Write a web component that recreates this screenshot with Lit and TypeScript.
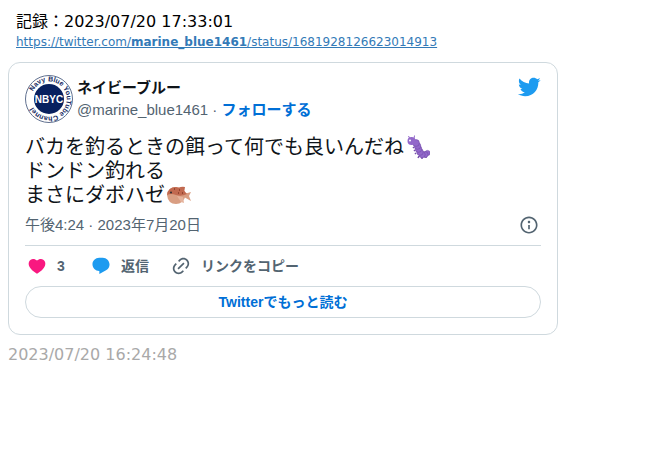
import { LitElement, html, css, svg } from "lit";
import { customElement } from "lit/decorators.js";

const icon = (cls: string, d: string) => html`
  <svg class="icon ${cls}" viewBox="0 0 24 24" aria-hidden="true">${svg`<path d=${d}></path>`}</svg>
`;

const BIRD =
  "M23.643 4.937c-.835.37-1.732.62-2.675.733.962-.576 1.7-1.49 2.048-2.578-.9.534-1.897.922-2.958 1.13-.85-.904-2.06-1.47-3.4-1.47-2.572 0-4.658 2.086-4.658 4.66 0 .364.042.718.12 1.06-3.873-.195-7.304-2.05-9.602-4.868-.4.69-.63 1.49-.63 2.342 0 1.616.823 3.043 2.072 3.878-.764-.025-1.482-.234-2.11-.583v.06c0 2.257 1.605 4.14 3.737 4.568-.392.106-.803.162-1.227.162-.3 0-.593-.028-.877-.082.593 1.85 2.313 3.198 4.352 3.234-1.595 1.25-3.604 1.995-5.786 1.995-.376 0-.747-.022-1.112-.065 2.062 1.323 4.51 2.093 7.14 2.093 8.57 0 13.255-7.098 13.255-13.254 0-.2-.005-.402-.014-.602.91-.658 1.7-1.477 2.323-2.41z";
const HEART =
  "M20.884 13.19c-1.351 2.48-4.001 5.12-8.379 7.67l-.503.3-.504-.3c-4.379-2.55-7.029-5.19-8.382-7.67-1.36-2.5-1.41-4.86-.514-6.67.887-1.79 2.647-2.91 4.601-3.01 1.651-.09 3.368.56 4.798 2.01 1.429-1.45 3.146-2.1 4.796-2.01 1.954.1 3.714 1.22 4.601 3.01.896 1.81.846 4.17-.514 6.67z";
const REPLY =
  "M1.751 10c0-4.42 3.584-8 8.005-8h4.366c4.49 0 8.129 3.64 8.129 8.13 0 2.96-1.607 5.68-4.196 7.11l-8.054 4.46v-3.69h-.067c-4.49.1-8.183-3.51-8.183-8.01z";
const CHAIN =
  "M18.36 5.64c-1.95-1.96-5.11-1.96-7.07 0L9.88 7.05 8.46 5.64l1.42-1.42c2.73-2.73 7.16-2.73 9.9 0 2.73 2.74 2.73 7.17 0 9.9l-1.42 1.42-1.41-1.42 1.41-1.41c1.96-1.96 1.96-5.12 0-7.07zm-2.12 3.53l-7.07 7.07-1.41-1.41 7.07-7.07 1.41 1.41zm-12.02.71l1.42-1.42 1.41 1.42-1.41 1.41c-1.96 1.96-1.96 5.12 0 7.07 1.95 1.96 5.11 1.96 7.07 0l1.41-1.41 1.42 1.41-1.42 1.42c-2.73 2.73-7.16 2.73-9.9 0-2.73-2.74-2.73-7.17 0-9.9z";
const INFO =
  "M13.5 8.5c0 .83-.67 1.5-1.5 1.5s-1.5-.67-1.5-1.5S11.17 7 12 7s1.5.67 1.5 1.5zM13 17v-5h-2v5h2zm-1 5.25c5.66 0 10.25-4.59 10.25-10.25S17.66 1.75 12 1.75 1.75 6.34 1.75 12 6.34 22.25 12 22.25zM20.25 12c0 4.56-3.69 8.25-8.25 8.25S3.75 16.56 3.75 12 7.44 3.75 12 3.75s8.25 3.69 8.25 8.25z";

@customElement("tweet-card")
class TweetCard extends LitElement {
  static styles = css`
    :host {
      display: block;
      box-sizing: border-box;
      max-width: 550px;
      padding: 12px 16px 16px;
      border: 1px solid #cfd9de;
      border-radius: 12px;
      background: #fff;
      color: #0f1419;
      font-family: "Liberation Sans", "Noto Sans CJK JP", sans-serif;
    }
    a {
      color: inherit;
      text-decoration: none;
    }
    button {
      padding: 0;
      border: 0;
      background: none;
      color: inherit;
      font: inherit;
      cursor: pointer;
    }
    .icon {
      display: block;
      flex: none;
      width: 20px;
      height: 20px;
      fill: currentColor;
    }
    .icon.bird {
      width: 24px;
      height: 24px;
      color: #1d9bf0;
    }
    .icon.heart {
      color: #f91880;
    }
    .icon.reply {
      color: #1d9bf0;
    }
    .header {
      display: flex;
      align-items: flex-start;
      gap: 4px;
    }
    .avatar {
      display: block;
      width: 48px;
      height: 48px;
    }
    .ring {
      font: bold 7px "Liberation Sans", sans-serif;
      fill: #14285f;
    }
    .initials {
      font: bold 10px "Liberation Sans", sans-serif;
      fill: #fff;
    }
    .who {
      flex: 1;
      padding-top: 2px;
      font-size: 15px;
      line-height: 22px;
    }
    .name {
      display: block;
      font-weight: bold;
    }
    .handle {
      color: #536471;
    }
    .follow {
      color: #006fd6;
      font-weight: bold;
    }
    .text {
      margin: 12px 0 0;
      font-size: 20px;
      line-height: 24px;
    }
    .emoji {
      width: 24px;
      height: 24px;
      margin: 0 2px;
      vertical-align: -5px;
    }
    .meta {
      display: flex;
      align-items: center;
      justify-content: space-between;
      margin-top: 6px;
      padding: 2px 2px 10px 0;
      border-bottom: 1px solid #cfd9de;
      color: #536471;
      font-size: 15px;
      line-height: 20px;
    }
    .actions {
      display: flex;
      gap: 22px;
      padding: 4px 2px;
      color: #536471;
      font-size: 14px;
      font-weight: bold;
      line-height: 20px;
    }
    .action {
      display: flex;
      align-items: center;
      gap: 10px;
      min-width: 42px;
      height: 32px;
    }
    .more {
      display: block;
      border: 1px solid #cfd9de;
      border-radius: 16px;
      color: #006fd6;
      font-size: 14px;
      font-weight: bold;
      line-height: 30px;
      text-align: center;
    }
  `;

  render() {
    return html`
      <div class="header">
        <a href="#profile" aria-label="ネイビーブルー">
          <svg class="avatar" viewBox="0 0 48 48" aria-hidden="true">
            <circle cx="24" cy="24" r="23.5" fill="#fff" stroke="#60708f"></circle>
            <circle cx="24" cy="24" r="15" fill="#08205f"></circle>
            <path id="ring" fill="none" d="M8 16.500A17.670 17.670 0 0 1 40 31.500A17.670 17.670 0 0 1 8 16.500"></path>
            <text class="ring"><textPath href="#ring">Navy Blue YouTube Channel</textPath></text>
            <text class="initials" x="24" y="28" text-anchor="middle">NBYC</text>
          </svg>
        </a>
        <div class="who">
          <a class="name" href="#profile">ネイビーブルー</a>
          <a class="handle" href="#profile">@marine_blue1461</a>
          <span class="handle">·</span>
          <a class="follow" href="#follow">フォローする</a>
        </div>
        <a href="#tweet" aria-label="Twitter">${icon("bird", BIRD)}</a>
      </div>
      <p class="text">
        バカを釣るときの餌って何でも良いんだね<svg class="emoji" viewBox="0 0 24 24" role="img" aria-label="いも虫">
          <path d="M4 4L2.500 1M8 4L8.500 .5" stroke="#9268ca" fill="none"></path>
          <path d="M8 12l-1 1M9 15l-1 1M10 18l-1 1M13 21l-1 2M16 22v2M20 21v2" stroke="#744eaa" stroke-width="1.5"></path>
          <g fill="#9268ca" stroke="#744eaa" stroke-width=".6">
            <circle cx="21.500" cy="18" r="2.600"></circle>
            <circle cx="19" cy="19.500" r="3"></circle>
            <circle cx="16" cy="19.500" r="3.200"></circle>
            <circle cx="14" cy="17" r="3.300"></circle>
            <circle cx="12.500" cy="14" r="3.300"></circle>
            <circle cx="11.500" cy="11" r="3.300"></circle>
            <circle cx="10" cy="8" r="3.400"></circle>
          </g>
          <circle cx="5.500" cy="6" r="4" fill="#9268ca"></circle>
          <circle cx="4" cy="5.500" r="1" fill="#fff"></circle>
        </svg><br />ドンドン釣れる<br />まさにダボハゼ<svg class="emoji" viewBox="0 0 24 24" role="img" aria-label="ふぐ">
          <path d="M17 11l7-2-2 4 2 5-7-4z" fill="#d99e82"></path>
          <path d="M11 5q4-2 7-1l-1 6z" fill="#c1694f"></path>
          <path d="M0 12Q1 4 9 4Q16 5 19 12Q16 21 9 21Q1 21 0 12z" fill="#d99e82"></path>
          <path d="M0 12Q1 4 9 4Q16 5 20 11Q14 14 9 12T0 12z" fill="#c1694f"></path>
          <path d="M10 13l6 1 1 6-3-1z" fill="#e5b39c"></path>
          <path d="M7 6h1M12 7h1M11 10h1M15 10h1" stroke="#662113"></path>
          <circle cx="4" cy="9.500" r="1" fill="#292f33"></circle>
        </svg>
      </p>
      <div class="meta">
        <a href="#tweet">午後4:24 · 2023年7月20日</a>
        <a href="#info" aria-label="情報">${icon("", INFO)}</a>
      </div>
      <div class="actions">
        <button class="action">${icon("heart", HEART)}<span>3</span></button>
        <button class="action">${icon("reply", REPLY)}<span>返信</span></button>
        <button class="action">${icon("", CHAIN)}<span>リンクをコピー</span></button>
      </div>
      <a class="more" href="#more">Twitterでもっと読む</a>
    `;
  }
}

@customElement("app-root")
class AppRoot extends LitElement {
  static styles = css`
    :host {
      display: block;
      padding: 12px 8px;
      background: #fff;
      color: #000;
      font: 16px/20px "DejaVu Sans", "Noto Sans CJK JP", sans-serif;
    }
    .record {
      padding: 0 8px;
    }
    .source {
      display: block;
      margin-bottom: 10px;
      color: #337ab7;
      font-size: 12px;
      line-height: 20px;
    }
    .stamp {
      margin-top: 10px;
      color: #a9a9a9;
    }
  `;

  render() {
    return html`
      <div class="record">
        <div>記録：2023/07/20 17:33:01</div>
        <a class="source" href="https://twitter.com/marine_blue1461/status/1681928126623014913"
          >https://twitter.com/<b>marine_blue1461</b>/status/1681928126623014913</a
        >
      </div>
      <tweet-card></tweet-card>
      <div class="stamp">2023/07/20 16:24:48</div>
    `;
  }
}
